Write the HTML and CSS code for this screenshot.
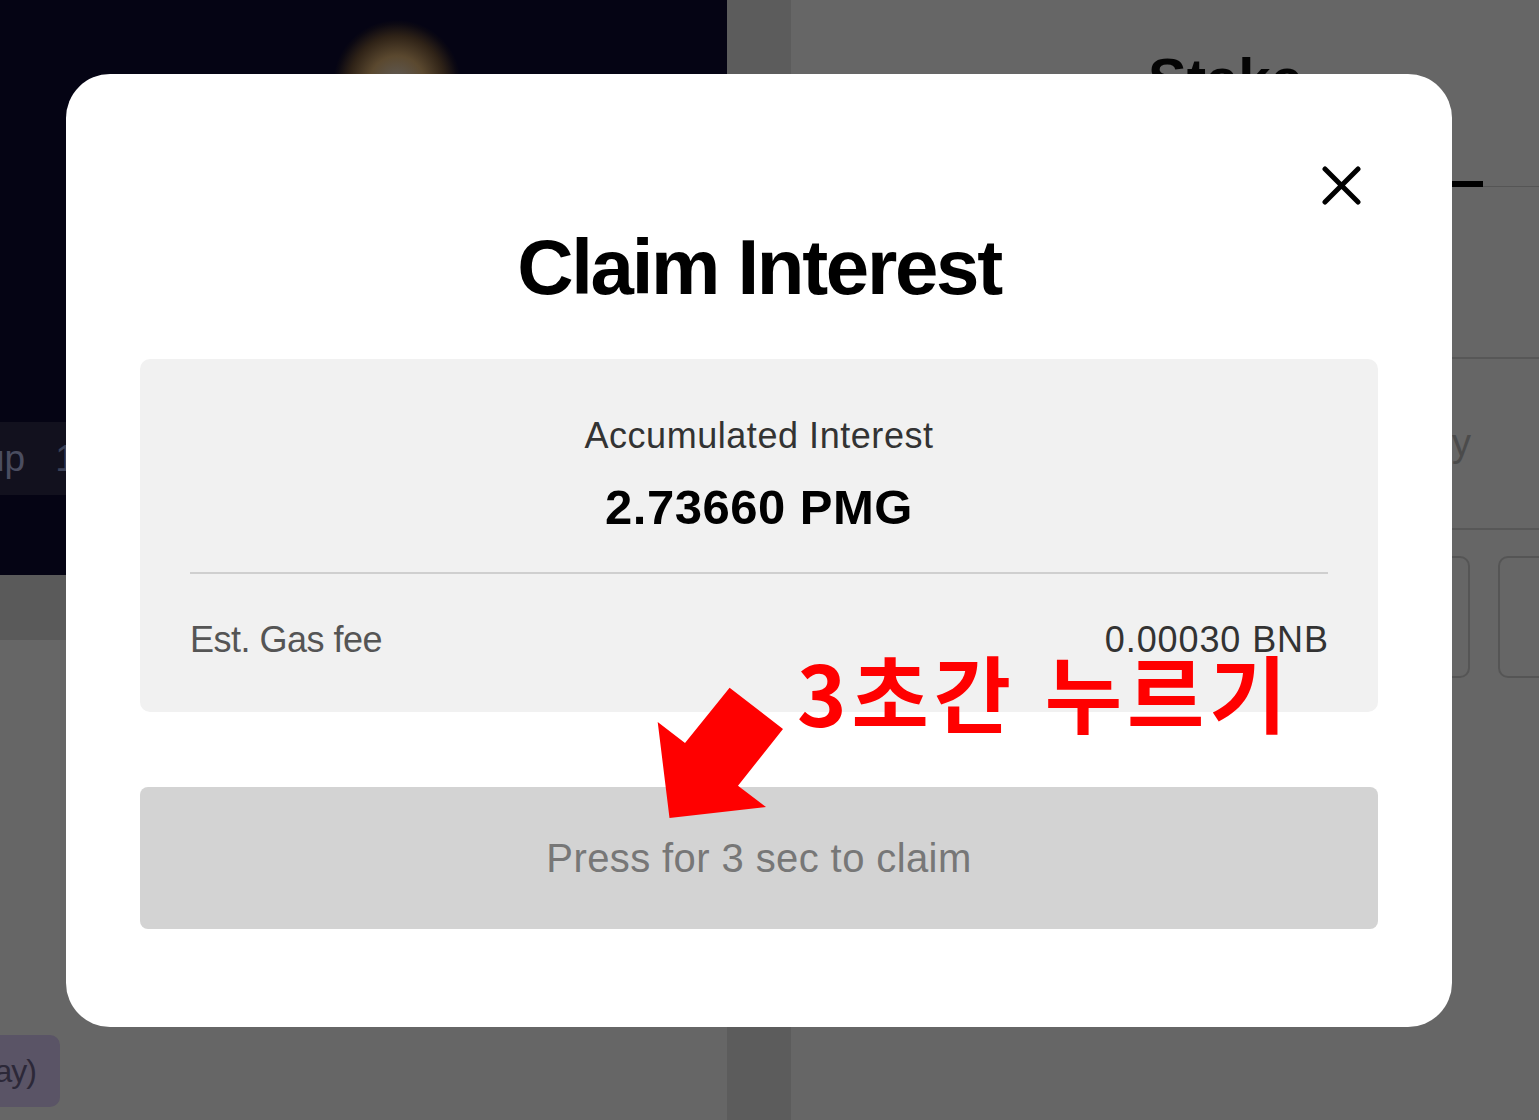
FILE: index.html
```html
<!DOCTYPE html>
<html lang="ko">
<head>
<meta charset="utf-8">
<title>Claim Interest</title>
<link rel="stylesheet" href="styles.css">
</head>
<body>
<div class="page">
  <div class="left">
    <div class="left-top">
      <div class="glow"></div>
      <div class="chip-dark"><span class="chip-p">up</span><span class="chip-1">1</span></div>
    </div>
    <div class="left-band"></div>
    <div class="left-rest">
      <div class="chip-purple">(Today)</div>
    </div>
  </div>
  <div class="gutter"></div>
  <div class="right">
    <div class="stake-title">Stake</div>
    <div class="tabs"><div class="tab active"></div><div class="tab"></div></div>
    <div class="sec-line first"></div>
    <div class="sec-row"><span class="sec-text">Daily</span></div>
    <div class="sec-line"></div>
    <div class="boxes"><div class="box"></div><div class="box"></div></div>
  </div>
</div>

<div class="modal">
  <button class="close" aria-label="close">
    <svg width="39" height="39" viewBox="0 0 39 39"><path d="M3 3 L36 36 M36 3 L3 36" stroke="#000" stroke-width="5" stroke-linecap="round" fill="none"/></svg>
  </button>
  <h1 class="modal-title">Claim Interest</h1>
  <div class="card">
    <div class="card-label">Accumulated Interest</div>
    <div class="card-value">2.73660 PMG</div>
    <div class="card-divider"></div>
    <div class="fee-row"><span class="fee-label">Est. Gas fee</span><span class="fee-value">0.00030 BNB</span></div>
  </div>
  <button class="claim-btn">Press for 3 sec to claim</button>
</div>

<div class="annot">3초간 누르기</div>
<svg class="arrow" width="140" height="145" viewBox="0 0 140 145"><polygon points="19.5,138 7.7,42 35,63 79.6,7.7 133,49 88,105.7 116,127" fill="#ff0000"/></svg>
</body>
</html>
```

FILE: styles.css
```css
html, body {
  margin: 0;
  padding: 0;
}
body {
  background: #666666;
  font-family: "Liberation Sans", Arial, sans-serif;
  width: 1539px;
  height: 1120px;
  overflow: hidden;
  position: relative;
}
.page {
  display: flex;
  height: 1120px;
}
.left {
  width: 727px;
  display: flex;
  flex-direction: column;
}
.left-top {
  height: 575px;
  background: #050414;
  position: relative;
  overflow: hidden;
  display: flex;
  flex-direction: column;
}
.glow {
  position: absolute;
  left: 333px;
  top: 20px;
  width: 128px;
  height: 128px;
  border-radius: 50%;
  background: radial-gradient(circle at 50% 50%, rgba(95,92,90,1) 0, rgba(100,80,50,0.9) 28px, rgba(75,55,25,0.6) 48px, rgba(30,22,15,0.3) 60px, rgba(5,4,20,0) 64px);
}
.chip-dark {
  margin-top: 422px;
  width: 110px;
  height: 73px;
  margin-left: -14px;
  background: #12111e;
  display: flex;
  align-items: center;
  gap: 30px;
  font-size: 37px;
  color: #4a4d60;
}
.chip-p { margin-left: -2px; }
.chip-1 { color: #3c4258; }
.left-band {
  height: 65px;
  background: #5a5a5a;
}
.left-rest {
  flex: 1;
  background: #666666;
  display: flex;
  flex-direction: column;
}
.chip-purple {
  margin-top: 395px;
  margin-left: -62px;
  width: 122px;
  height: 72px;
  border-radius: 10px;
  background: #5a5466;
  color: #2c2838;
  font-size: 32px;
  display: flex;
  align-items: center;
  justify-content: flex-end;
  padding-right: 24px;
  box-sizing: border-box;
  letter-spacing: -1px;
}
.gutter {
  width: 64px;
  background: #5c5c5c;
}
.right {
  flex: 1;
  background: #666666;
  display: flex;
  flex-direction: column;
  overflow: hidden;
}
.stake-title {
  margin-top: 50px;
  margin-left: 357px;
  font-size: 58px;
  line-height: 58px;
  font-weight: 700;
  color: #050505;
}
.tabs {
  display: flex;
  margin-top: 38px;
  margin-left: 40px;
  border-bottom: 1px solid #555555;
}
.tab {
  height: 40px;
  flex: 1;
}
.tab.active {
  flex: 0 0 652px;
  box-sizing: border-box;
  border-bottom: 6px solid #000;
  margin-bottom: -1px;
  height: 41px;
}
.sec-line {
  height: 2px;
  background: #575757;
}
.sec-line.first {
  margin-top: 170px;
}
.sec-row {
  height: 169px;
  display: flex;
  align-items: center;
  justify-content: flex-end;
  padding-right: 68px;
}
.sec-text {
  font-size: 38px;
  color: #4b4b4b;
}
.boxes {
  margin-top: 26px;
  display: flex;
  gap: 28px;
  margin-left: 479px;
}
.box {
  flex: 0 0 200px;
  height: 122px;
  box-sizing: border-box;
  border: 2px solid #555555;
  border-radius: 10px;
}

/* modal */
.modal {
  position: absolute;
  left: 66px;
  top: 74px;
  width: 1386px;
  height: 953px;
  background: #ffffff;
  border-radius: 44px;
  box-sizing: border-box;
  padding: 0 74px;
  display: flex;
  flex-direction: column;
}
.close {
  position: absolute;
  left: 1256px;
  top: 92px;
  width: 39px;
  height: 39px;
  padding: 0;
  border: 0;
  background: transparent;
  display: block;
}
.close svg { display: block; }
.modal-title {
  margin: 154px 0 0;
  text-align: center;
  font-size: 78px;
  line-height: 78px;
  font-weight: 700;
  letter-spacing: -2.3px;
  color: #000;
}
.card {
  margin-top: 53px;
  background: #f1f1f1;
  border-radius: 10px;
  padding: 59px 50px 54px;
  display: flex;
  flex-direction: column;
}
.card-label {
  text-align: center;
  font-size: 36px;
  line-height: 36px;
  color: #333333;
  letter-spacing: 0.55px;
}
.card-value {
  margin-top: 29px;
  text-align: center;
  font-size: 49px;
  line-height: 49px;
  font-weight: 700;
  color: #000;
  letter-spacing: 0.5px;
}
.card-divider {
  margin-top: 40px;
  height: 2px;
  background: #cfcfcf;
}
.fee-row {
  margin-top: 48px;
  display: flex;
  justify-content: space-between;
  font-size: 36px;
  line-height: 36px;
}
.fee-label {
  color: #555555;
  letter-spacing: -0.5px;
}
.fee-value {
  color: #333333;
  letter-spacing: 0.9px;
  margin-right: -0.9px;
}
.claim-btn {
  margin-top: 75px;
  height: 142px;
  width: 100%;
  border: 0;
  border-radius: 8px;
  background: #d3d3d3;
  color: #777777;
  font-family: "Liberation Sans", Arial, sans-serif;
  font-size: 40px;
  letter-spacing: 0.4px;
  padding: 0;
}

/* annotation */
.annot {
  position: absolute;
  left: 797px;
  top: 649px;
  font-family: "Noto Sans CJK KR", "Liberation Sans", sans-serif;
  font-weight: 700;
  font-size: 84px;
  line-height: 84px;
  letter-spacing: 5px;
  color: #ff0000;
  white-space: nowrap;
}
.arrow {
  position: absolute;
  left: 650px;
  top: 680px;
}
```
